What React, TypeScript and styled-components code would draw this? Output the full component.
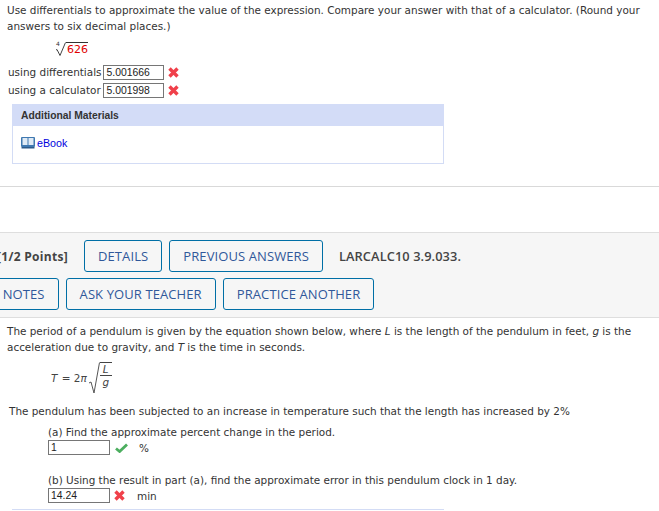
import styled, { createGlobalStyle } from "styled-components";

const GlobalStyle = createGlobalStyle`
  html, body {
    margin: 0;
    padding: 0;
    background: #fff;
    overflow: hidden;
  }
  body {
    font-family: "DejaVu Sans", Verdana, sans-serif;
    font-size: 10.45px;
    color: #333;
  }
`;

const Page = styled.div`
  width: 659px;
  height: 511px;
  overflow: hidden;
`;

const Question = styled.div`
  padding: 2px 7px 0;
  height: 186px;
  box-sizing: border-box;
`;

const Prose = styled.p<{ $left?: number }>`
  margin: 0;
  padding-left: ${(p) => p.$left ?? 0}px;
  line-height: 16px;
`;

const RootRow = styled.div`
  display: flex;
  align-items: flex-start;
  height: 23px;
  margin: 8px 0 0 48px;
`;

const RootIndex = styled.sup`
  font-size: 6px;
  line-height: 6px;
  margin: 0;
  width: 0;
  transform: translate(1px, -1px);
`;

const RootValue = styled.span`
  color: #e00000;
  border-top: 1px solid #333;
  font-size: 11px;
  line-height: 14px;
  padding: 0 0 0 1px;
  height: 14px;
`;

const AnswerGrid = styled.div`
  display: grid;
  grid-template-columns: max-content 61px 16px;
  column-gap: 2px;
  row-gap: 3px;
  align-items: center;
  width: max-content;
`;

const AnswerLabel = styled.span`
  line-height: 15px;
  margin-left: 1px;
`;

const AnswerBox = styled.div<{ $width?: number }>`
  box-sizing: border-box;
  width: ${(p) => p.$width ?? 61}px;
  height: 15px;
  border: 1px solid #767676;
  font-family: "Liberation Sans", Arial, sans-serif;
  font-size: 10.4px;
  line-height: 13px;
  padding-left: 2px;
  color: #222;
  background: #fff;
`;

const MarkSlot = styled.span<{ $left: number }>`
  display: inline-flex;
  margin-left: ${(p) => p.$left}px;
`;

const Materials = styled.div`
  width: 432px;
  margin: 6px 0 0 5px;
  box-sizing: border-box;
  border: 1px solid #d3dcf5;
`;

const MaterialsHead = styled.div`
  background: #d3dcf7;
  height: 22px;
  margin: -1px;
  padding-left: 9px;
  font-family: "Liberation Sans", Arial, sans-serif;
  font-weight: 700;
  font-size: 10.3px;
  line-height: 23px;
  color: #333;
`;

const MaterialsBody = styled.div`
  height: 38px;
  padding: 11px 0 0 8px;
  box-sizing: border-box;
  display: flex;
  align-items: flex-start;
  gap: 2px;
`;

const EbookLink = styled.a`
  font-family: "Liberation Sans", Arial, sans-serif;
  font-size: 10.7px;
  line-height: 14px;
  color: #0000dd;
  text-decoration: none;
`;

const Rule = styled.hr`
  margin: 0 0 45px;
  border: 0;
  border-top: 1px solid #d9d9d9;
  height: 0;
`;

const Band = styled.div`
  background: #f6f6f6;
  border-top: 1px solid #dedede;
  border-bottom: 1px solid #dedede;
  box-sizing: border-box;
  height: 86px;
  padding-top: 7px;
  overflow: hidden;
`;

const BandRow = styled.div<{ $offset: number }>`
  display: flex;
  align-items: center;
  gap: 7px;
  height: 32px;
  margin: 0 0 6px ${(p) => p.$offset}px;
`;

const PointsLabel = styled.span`
  font-family: "Open Sans", sans-serif;
  font-weight: 700;
  font-size: 12px;
  letter-spacing: 0.3px;
  color: #444;
  white-space: nowrap;
  width: 80px;
`;

const AssignmentCode = styled.span`
  font-family: "Open Sans", sans-serif;
  font-weight: 600;
  font-size: 12.8px;
  letter-spacing: 0.1px;
  color: #444;
  white-space: nowrap;
  margin-left: 9px;
`;

const ActionButton = styled.button`
  box-sizing: border-box;
  height: 32px;
  padding: 0 13px;
  border: 1px solid #006fa6;
  border-radius: 3px;
  background: #f6f6f6;
  font-family: "Open Sans", sans-serif;
  font-size: 13px;
  letter-spacing: 0.1px;
  color: #30589a;
  white-space: nowrap;
`;

const Problem = styled.div`
  padding: 5px 7px 0;
`;

const Formula = styled.div`
  display: flex;
  align-items: center;
  height: 38px;
  margin: 4px 0 6px 44px;
  font-size: 10.45px;
  color: #444;
`;

const Var = styled.i`
  margin-right: 1px;
`;

const RootGroup = styled.span`
  display: inline-flex;
  align-items: flex-start;
`;

const Fraction = styled.span`
  display: inline-flex;
  flex-direction: column;
  align-items: center;
  width: 12px;
  border-top: 1px solid #444;
  font-style: italic;
  font-size: 10.45px;
  line-height: 12px;
`;

const FractionTop = styled.span`
  border-bottom: 1px solid #444;
  width: 100%;
  text-align: center;
`;

const Part = styled.div<{ $top: number }>`
  margin: ${(p) => p.$top}px 0 0 41px;
`;

const PartAnswer = styled.div`
  display: flex;
  align-items: center;
  height: 15px;
`;

const Unit = styled.span<{ $left: number }>`
  margin-left: ${(p) => p.$left}px;
`;

const NextPanelEdge = styled.div`
  width: 432px;
  margin: 6px 0 0 5px;
  border-top: 1px solid #d3dcf5;
`;

const CrossMark = () => (
  <svg width="11" height="11" viewBox="0 0 11 11">
    <path d="M1.5 1.5 L9.5 9.5 M9.5 1.5 L1.5 9.5" stroke="#f0404a" strokeWidth="3.4" fill="none" />
  </svg>
);

const CheckMark = () => (
  <svg width="13" height="10" viewBox="0 0 13 10">
    <path d="M1 5.5 L4.6 8.5 L12 1.5" stroke="#4cae5f" strokeWidth="2.8" fill="none" />
  </svg>
);

const BookIcon = () => (
  <svg width="14" height="13" viewBox="0 0 14 13">
    <rect x="0" y="1" width="14" height="10" rx="1" fill="#3f78b0" />
    <path d="M1.5 2 H6.5 V9 H1.5 Z M7.5 2 H12.5 V9 H7.5 Z" fill="#dfeaf5" />
    <rect x="0.5" y="11" width="13" height="1.5" fill="#2c5a8a" />
  </svg>
);

const RootSign = () => (
  <svg width="11" height="15" viewBox="0 0 11 15">
    <path d="M1 8 L2 7.5 L5 13.5 L10.5 0.5" stroke="#444" strokeWidth="1" fill="none" />
  </svg>
);

const TallRoot = () => (
  <svg width="12" height="32" viewBox="0 0 12 32">
    <path d="M1 21 L3 20 L6 31 L11.5 0.5" stroke="#555" strokeWidth="1" fill="none" />
  </svg>
);

export default function App() {
  return (
    <Page>
      <GlobalStyle />
      <Question>
        <Prose>
          Use differentials to approximate the value of the expression. Compare your answer with that of a calculator. (Round your answers to six decimal places.)
        </Prose>
        <RootRow>
          <RootIndex>4</RootIndex>
          <RootSign />
          <RootValue>626</RootValue>
        </RootRow>
        <AnswerGrid>
          <AnswerLabel>using differentials</AnswerLabel>
          <AnswerBox>5.001666</AnswerBox>
          <MarkSlot $left={2}><CrossMark /></MarkSlot>
          <AnswerLabel>using a calculator</AnswerLabel>
          <AnswerBox>5.001998</AnswerBox>
          <MarkSlot $left={2}><CrossMark /></MarkSlot>
        </AnswerGrid>
        <Materials>
          <MaterialsHead>Additional Materials</MaterialsHead>
          <MaterialsBody>
            <BookIcon />
            <EbookLink>eBook</EbookLink>
          </MaterialsBody>
        </Materials>
      </Question>
      <Rule />
      <Band>
        <BandRow $offset={-3}>
          <PointsLabel>[1/2 Points]</PointsLabel>
          <ActionButton>DETAILS</ActionButton>
          <ActionButton>PREVIOUS ANSWERS</ActionButton>
          <AssignmentCode>LARCALC10 3.9.033.</AssignmentCode>
        </BandRow>
        <BandRow $offset={-34}>
          <ActionButton>MY NOTES</ActionButton>
          <ActionButton>ASK YOUR TEACHER</ActionButton>
          <ActionButton>PRACTICE ANOTHER</ActionButton>
        </BandRow>
      </Band>
      <Problem>
        <Prose>
          The period of a pendulum is given by the equation shown below, where <i>L</i> is the length of the pendulum in feet, <i>g</i> is the acceleration due to gravity, and <i>T</i> is the time in seconds.
        </Prose>
        <Formula>
          <Var>T</Var>&nbsp;=&nbsp;2<Var>π</Var>
          <RootGroup>
            <TallRoot />
            <Fraction>
              <FractionTop>L</FractionTop>
              g
            </Fraction>
          </RootGroup>
        </Formula>
        <Prose $left={2}>
          The pendulum has been subjected to an increase in temperature such that the length has increased by 2%
        </Prose>
        <Part $top={5}>
          <Prose>(a) Find the approximate percent change in the period.</Prose>
          <PartAnswer>
            <AnswerBox $width={62}>1</AnswerBox>
            <MarkSlot $left={5}><CheckMark /></MarkSlot>
            <Unit $left={11}>%</Unit>
          </PartAnswer>
        </Part>
        <Part $top={17}>
          <Prose>(b) Using the result in part (a), find the approximate error in this pendulum clock in 1 day.</Prose>
          <PartAnswer>
            <AnswerBox $width={62}>14.24</AnswerBox>
            <MarkSlot $left={4}><CrossMark /></MarkSlot>
            <Unit $left={12}>min</Unit>
          </PartAnswer>
        </Part>
        <NextPanelEdge />
      </Problem>
    </Page>
  );
}
